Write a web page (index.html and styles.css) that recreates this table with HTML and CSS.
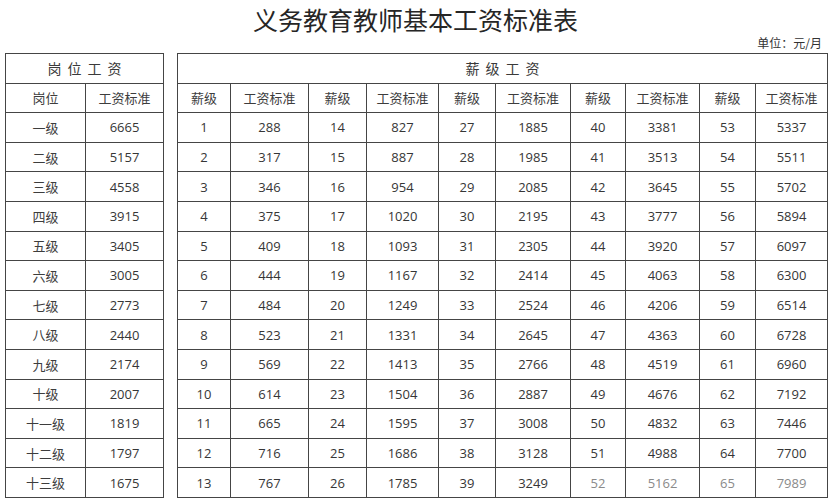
FILE: index.html
```html
<!DOCTYPE html>
<html lang="zh">
<head>
<meta charset="utf-8">
<title>义务教育教师基本工资标准表</title>
<link rel="stylesheet" href="styles.css">
</head>
<body>
<div class="page">
  <h1 class="title">义务教育教师基本工资标准表</h1>
  <div class="unit">单位：元/月</div>
  <div class="tables">
    <table class="grid left">
      <colgroup><col class="c80"><col class="c78"></colgroup>
      <tr><th colspan="2" class="head">岗位工资</th></tr>
      <tr><td class="cn">岗位</td><td class="cn">工资标准</td></tr>
      <tr><td class="cn">一级</td><td>6665</td></tr>
      <tr><td class="cn">二级</td><td>5157</td></tr>
      <tr><td class="cn">三级</td><td>4558</td></tr>
      <tr><td class="cn">四级</td><td>3915</td></tr>
      <tr><td class="cn">五级</td><td>3405</td></tr>
      <tr><td class="cn">六级</td><td>3005</td></tr>
      <tr><td class="cn">七级</td><td>2773</td></tr>
      <tr><td class="cn">八级</td><td>2440</td></tr>
      <tr><td class="cn">九级</td><td>2174</td></tr>
      <tr><td class="cn">十级</td><td>2007</td></tr>
      <tr><td class="cn">十一级</td><td>1819</td></tr>
      <tr><td class="cn">十二级</td><td>1797</td></tr>
      <tr><td class="cn">十三级</td><td>1675</td></tr>
    </table>
    <table class="grid right">
      <colgroup>
        <col class="w53"><col class="w78"><col class="w58"><col class="w72"><col class="w57"><col class="w75"><col class="w55"><col class="w74"><col class="w56"><col class="w72">
      </colgroup>
      <tr><th colspan="10" class="head">薪级工资</th></tr>
      <tr>
        <td class="cn">薪级</td><td class="cn">工资标准</td><td class="cn">薪级</td><td class="cn">工资标准</td><td class="cn">薪级</td><td class="cn">工资标准</td><td class="cn">薪级</td><td class="cn">工资标准</td><td class="cn">薪级</td><td class="cn">工资标准</td>
      </tr>
      <tr><td>1</td><td>288</td><td>14</td><td>827</td><td>27</td><td>1885</td><td>40</td><td>3381</td><td>53</td><td>5337</td></tr>
      <tr><td>2</td><td>317</td><td>15</td><td>887</td><td>28</td><td>1985</td><td>41</td><td>3513</td><td>54</td><td>5511</td></tr>
      <tr><td>3</td><td>346</td><td>16</td><td>954</td><td>29</td><td>2085</td><td>42</td><td>3645</td><td>55</td><td>5702</td></tr>
      <tr><td>4</td><td>375</td><td>17</td><td>1020</td><td>30</td><td>2195</td><td>43</td><td>3777</td><td>56</td><td>5894</td></tr>
      <tr><td>5</td><td>409</td><td>18</td><td>1093</td><td>31</td><td>2305</td><td>44</td><td>3920</td><td>57</td><td>6097</td></tr>
      <tr><td>6</td><td>444</td><td>19</td><td>1167</td><td>32</td><td>2414</td><td>45</td><td>4063</td><td>58</td><td>6300</td></tr>
      <tr><td>7</td><td>484</td><td>20</td><td>1249</td><td>33</td><td>2524</td><td>46</td><td>4206</td><td>59</td><td>6514</td></tr>
      <tr><td>8</td><td>523</td><td>21</td><td>1331</td><td>34</td><td>2645</td><td>47</td><td>4363</td><td>60</td><td>6728</td></tr>
      <tr><td>9</td><td>569</td><td>22</td><td>1413</td><td>35</td><td>2766</td><td>48</td><td>4519</td><td>61</td><td>6960</td></tr>
      <tr><td>10</td><td>614</td><td>23</td><td>1504</td><td>36</td><td>2887</td><td>49</td><td>4676</td><td>62</td><td>7192</td></tr>
      <tr><td>11</td><td>665</td><td>24</td><td>1595</td><td>37</td><td>3008</td><td>50</td><td>4832</td><td>63</td><td>7446</td></tr>
      <tr><td>12</td><td>716</td><td>25</td><td>1686</td><td>38</td><td>3128</td><td>51</td><td>4988</td><td>64</td><td>7700</td></tr>
      <tr><td>13</td><td>767</td><td>26</td><td>1785</td><td>39</td><td>3249</td><td class="faded">52</td><td class="faded">5162</td><td class="faded">65</td><td class="faded">7989</td></tr>
    </table>
  </div>
</div>
</body>
</html>
```
FILE: styles.css
```css
html, body {
  margin: 0;
  padding: 0;
  background: #ffffff;
}
.page {
  width: 832px;
  height: 503px;
  padding: 0 6px 0 5px;
  box-sizing: border-box;
  font-family: "Noto Sans CJK SC", "Noto Sans", sans-serif;
  color: #333333;
}
.title {
  margin: 0;
  height: 34px;
  line-height: 38px;
  font-size: 25px;
  font-weight: 400;
  text-align: center;
  color: #262626;
}
.unit {
  height: 19px;
  line-height: 18px;
  font-size: 12px;
  text-align: right;
  padding-right: 4px;
  color: #333333;
}
.tables {
  display: flex;
  gap: 13px;
  align-items: flex-start;
}
.grid {
  border-collapse: collapse;
  table-layout: fixed;
  border: 1.5px solid #3a3a3a;
}
.grid td, .grid th {
  border: 1px solid #454545;
  height: 28.6px;
  padding: 0;
  text-align: center;
  vertical-align: middle;
  font-family: "Open Sans", "Noto Sans CJK SC", sans-serif;
  font-size: 13px;
  font-weight: 400;
  color: #363636;
  white-space: nowrap;
}
.grid .cn {
  font-family: "Noto Sans CJK SC", sans-serif;
  font-size: 13px;
  color: #3d3d3d;
}
.grid .head {
  font-family: "Noto Sans CJK SC", sans-serif;
  font-size: 14px;
  letter-spacing: 6px;
  text-indent: 6px;
  color: #3a3a3a;
}
.left { width: 158px; }
.right { width: 650px; }
.c80 { width: 80px; }
.c78 { width: 78px; }
.w53 { width: 53px; }
.w78 { width: 78px; }
.w58 { width: 58px; }
.w72 { width: 72px; }
.w57 { width: 57px; }
.w75 { width: 75px; }
.w55 { width: 55px; }
.w74 { width: 74px; }
.w56 { width: 56px; }
.grid td.faded {
  color: #8a8a8a;
  border-left: 1px dashed #777777;
}
```
